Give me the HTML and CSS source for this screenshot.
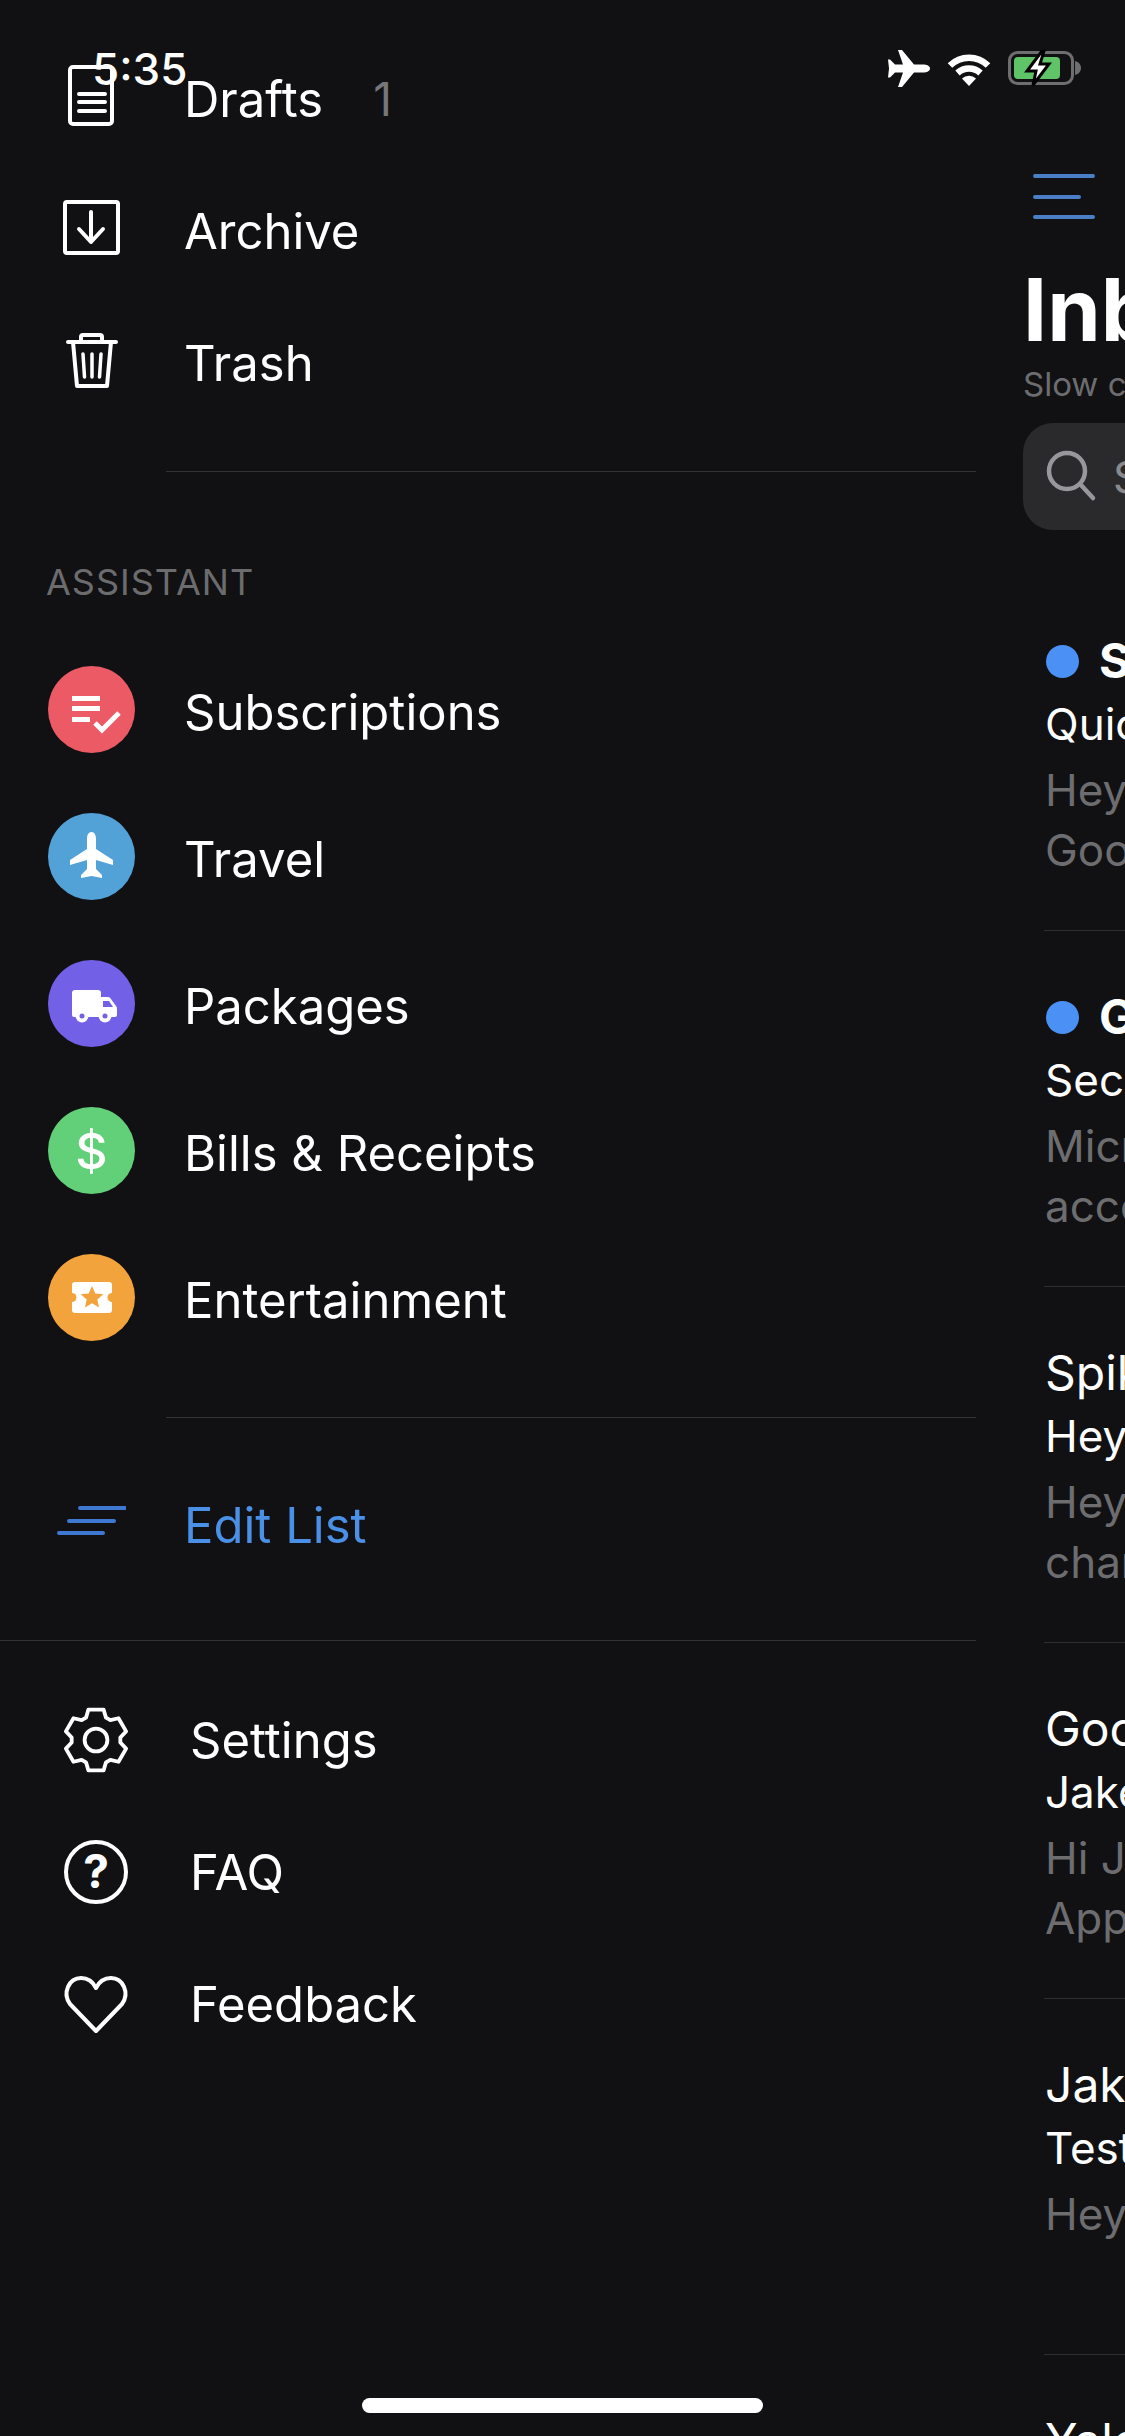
FILE: index.html
```html
<!DOCTYPE html>
<html lang="en">
<head>
    <meta charset="UTF-8">
    <meta name="viewport" content="width=device-width, initial-scale=1.0">
    <title>Inbox</title>
    <link rel="stylesheet" href="styles.css">
</head>
<body>

    <!-- status bar sits over the scrolled list -->
    <div class="status-bar">
        <span class="status-time">5:35</span>
        <svg class="status-plane" width="42" height="37" viewBox="0 0 42 37"><path d="M42 18.5c0-2.500-3-4-7-4h-9L14 0h-4l5 14.500H7L2 9.500H0l1 9-1 9h2l5-5h8L10 37h4l12-14.500h9c4 0 7-1.500 7-4z"/></svg>
        <svg class="status-wifi" width="46" height="34" viewBox="0 0 46 34"><path class="wifi-arc" d="M4 13.500a27 27 0 0 1 38 0"/><path class="wifi-arc" d="M11.500 21a17 17 0 0 1 23 0"/><path d="M23 34l-7-7.500a10 10 0 0 1 14 0z"/></svg>
        <svg class="status-battery" width="74" height="36" viewBox="0 0 74 36">
            <rect x="1.500" y="2.500" width="63" height="31" rx="8" class="battery-shell"/>
            <path d="M67 11c4 1 6 4 6 7s-2 6-6 7z" fill="#6e6e6e"/>
            <rect x="6" y="7" width="46" height="22" rx="4" fill="#5ec467"/>
            <path d="M34 1L19 21h9l-3 14 16-21h-9l4-13z" class="battery-bolt"/>
        </svg>
    </div>

    <div class="screen">

        <nav class="sidebar">
            <ul class="menu">
                <li class="menu-row">
                    <svg class="line-icon" width="64" height="72" viewBox="0 0 64 72"><rect x="10" y="4" width="42" height="57" rx="3"/><path d="M19 31h26M19 39h26M19 48h26"/></svg>
                    <span class="menu-label">Drafts</span>
                    <span class="menu-count">1</span>
                </li>
                <li class="menu-row">
                    <svg class="line-icon" width="64" height="72" viewBox="0 0 64 72"><rect x="5" y="7" width="53" height="51" rx="2"/><path d="M31 17v30M19 34l12 13 12-13"/></svg>
                    <span class="menu-label">Archive</span>
                </li>
                <li class="menu-row">
                    <svg class="line-icon" width="64" height="72" viewBox="0 0 64 72"><path d="M8 15h48M21 15V10q0-2 2-2h17q2 0 2 2v5M13 15l4 44h30l4-44"/><path class="thin" d="M23 27l1.500 23M32 27v23M41 27l-1.500 23"/></svg>
                    <span class="menu-label">Trash</span>
                </li>
            </ul>
            <div class="divider divider-top"></div>

            <div class="section-title">ASSISTANT</div>
            <ul class="menu">
                <li class="assist-row">
                    <svg class="assist-icon" width="87" height="87" viewBox="0 0 87 87"><circle cx="43.500" cy="43.500" r="43.500" fill="#ec5a66"/><path class="glyph-line" d="M24 32.500h28M24 42.500h28M24 53.500h18"/><path class="glyph-line" stroke-width="6" d="M47 57l7 7 17-17"/></svg>
                    <span class="menu-label">Subscriptions</span>
                </li>
                <li class="assist-row">
                    <svg class="assist-icon" width="87" height="87" viewBox="0 0 87 87"><circle cx="43.500" cy="43.500" r="43.500" fill="#52a2d8"/><path class="glyph-fill" d="M43.500 19c3 0 4.500 3 4.500 7v10l17 11v5l-17-5v9l6 6v3l-10.500-2-10.500 2v-3l6-6v-9l-17 5v-5l17-11V26c0-4 1.500-7 4.500-7z"/></svg>
                    <span class="menu-label">Travel</span>
                </li>
                <li class="assist-row">
                    <svg class="assist-icon" width="87" height="87" viewBox="0 0 87 87"><circle cx="43.500" cy="43.500" r="43.500" fill="#7260e6"/><path class="glyph-fill" d="M24 33q0-3 3-3h23q3 0 3 3v4h7q2 0 3 2l5 7q1 1 1 3v6q0 2-2 2H26q-2 0-2-2z"/><path d="M55 41h6l4 6H55z" fill="#7260e6"/><circle cx="34" cy="56" r="6.500" fill="#fff"/><circle cx="34" cy="56" r="2.500" fill="#7260e6"/><circle cx="57" cy="56" r="6.500" fill="#fff"/><circle cx="57" cy="56" r="2.500" fill="#7260e6"/></svg>
                    <span class="menu-label">Packages</span>
                </li>
                <li class="assist-row">
                    <svg class="assist-icon" width="87" height="87" viewBox="0 0 87 87"><circle cx="43.500" cy="43.500" r="43.500" fill="#62d078"/><text x="43.500" y="62" class="glyph-text">$</text></svg>
                    <span class="menu-label">Bills &amp; Receipts</span>
                </li>
                <li class="assist-row">
                    <svg class="assist-icon" width="87" height="87" viewBox="0 0 87 87"><circle cx="43.500" cy="43.500" r="43.500" fill="#f2a33c"/><rect class="glyph-fill" x="24" y="28" width="40" height="31" rx="3"/><circle cx="24" cy="43.500" r="4.500" fill="#f2a33c"/><circle cx="64" cy="43.500" r="4.500" fill="#f2a33c"/><path d="M44 32l3.300 7.500 8 .7-6 5.300 1.800 8L44 49.300l-7.100 4.200 1.800-8-6-5.300 8-.7z" fill="#f2a33c"/></svg>
                    <span class="menu-label">Entertainment</span>
                </li>
            </ul>
            <div class="divider divider-assist"></div>

            <div class="edit-row">
                <svg class="edit-icon" width="70" height="60" viewBox="0 0 70 60"><path d="M24 13h45M13 26h45M3 38h44"/></svg>
                <span class="menu-label edit-label">Edit List</span>
            </div>
            <div class="divider divider-full"></div>

            <ul class="menu menu-bottom">
                <li class="menu-row">
                    <svg class="line-icon" width="64" height="72" viewBox="0 0 64 72"><g transform="translate(32 36) scale(.95)"><polygon points="-10.500,-23.500 -8,-32 8,-32 10.500,-23.500 15.100,-20.840 23.700,-22.900 31.700,-9.100 25.600,-2.660 25.600,2.660 31.700,9.100 23.700,22.900 15.100,20.840 10.500,23.500 8,32 -8,32 -10.500,23.500 -15.100,20.840 -23.700,22.900 -31.700,9.100 -25.600,2.660 -25.600,-2.660 -31.700,-9.100 -23.700,-22.900 -15.100,-20.840"/><circle r="12"/></g></svg>
                    <span class="menu-label">Settings</span>
                </li>
                <li class="menu-row">
                    <svg class="line-icon" width="64" height="72" viewBox="0 0 64 72"><circle cx="32" cy="36" r="30"/><text x="32" y="52" class="faq-mark">?</text></svg>
                    <span class="menu-label">FAQ</span>
                </li>
                <li class="menu-row">
                    <svg class="line-icon" width="64" height="72" viewBox="0 0 64 72"><path d="M32 63L6 36C-2 25 5 10 17 10c7 0 12 4 15 10 3-6 8-10 15-10 12 0 19 15 11 26z"/></svg>
                    <span class="menu-label">Feedback</span>
                </li>
            </ul>
        </nav>

        <main class="inbox">
            <svg class="burger" width="62" height="46" viewBox="0 0 62 46"><path d="M2 2h58M2 23h44M2 43h58"/></svg>
            <h1 class="inbox-title">Inbox</h1>
            <p class="inbox-status">Slow connection</p>
            <div class="search-box">
                <svg class="search-icon" width="56" height="56" viewBox="0 0 56 56"><circle cx="22" cy="22" r="18"/><path d="M36 36l12 13"/></svg>
                <span class="search-text">Search</span>
            </div>

            <div class="mail-row">
                <div class="mail-sender unread"><span class="dot"></span>Spike</div>
                <div class="mail-subject">Quick start</div>
                <div class="mail-preview">Hey Jake,</div>
                <div class="mail-preview">Good to see you</div>
            </div>
            <div class="mail-row">
                <div class="mail-sender unread"><span class="dot"></span>Google</div>
                <div class="mail-subject">Security alert</div>
                <div class="mail-preview">Microsoft</div>
                <div class="mail-preview">account</div>
            </div>
            <div class="mail-row">
                <div class="mail-sender">Spike</div>
                <div class="mail-subject">Hey</div>
                <div class="mail-preview">Hey</div>
                <div class="mail-preview">charge</div>
            </div>
            <div class="mail-row">
                <div class="mail-sender">Google</div>
                <div class="mail-subject">Jake</div>
                <div class="mail-preview">Hi Jake</div>
                <div class="mail-preview">Apple</div>
            </div>
            <div class="mail-row">
                <div class="mail-sender">Jake</div>
                <div class="mail-subject">Test</div>
                <div class="mail-preview">Hey</div>
            </div>
            <div class="mail-row">
                <div class="mail-sender">Yale</div>
            </div>
        </main>
    </div>

    <div class="home-bar"></div>

</body>
</html>
```
FILE: styles.css
```css
html, body {
    margin: 0;
    padding: 0;
    height: 2436px;
    overflow: hidden;
    background: #111113;
    color: #fff;
    font-family: Inter, "Liberation Sans", sans-serif;
}
ul {
    list-style: none;
    margin: 0;
    padding: 0;
}
.screen {
    display: flex;
    width: 1125px;
    height: 2436px;
    overflow: hidden;
}

/* status bar */
.status-bar {
    position: absolute;
    top: 50px;
    left: 0;
    width: 1125px;
    height: 37px;
    z-index: 2;
}
.status-bar svg {
    position: absolute;
    fill: #fff;
}
.status-time {
    position: absolute;
    left: 92px;
    top: 1px;
    font-size: 44px;
    line-height: 36px;
    font-weight: 500;
}
.status-plane { left: 888px; top: 0; }
.status-wifi { left: 946px; top: 2px; }
.status-battery { left: 1008px; top: 0; }
.wifi-arc {
    fill: none;
    stroke: #fff;
    stroke-width: 6.500;
}
.battery-shell {
    fill: none;
    stroke: #6e6e6e;
    stroke-width: 3;
}
.battery-bolt {
    fill: #fff;
    stroke: #000;
    stroke-width: 3;
}

/* sidebar */
.sidebar {
    flex: none;
    width: 976px;
    padding-top: 33px;
    box-sizing: border-box;
}
.menu-row {
    display: flex;
    align-items: center;
    height: 132px;
    padding-left: 60px;
}
.menu-label {
    font-size: 49px;
    margin-left: 60px;
    white-space: nowrap;
}
.menu-count {
    font-size: 46px;
    color: #77777a;
    margin-left: 50px;
}
.line-icon {
    flex: none;
    overflow: visible;
    fill: none;
    stroke: #fff;
    stroke-width: 4;
    stroke-linecap: round;
    stroke-linejoin: round;
}
.line-icon .thin {
    stroke-width: 3.500;
}
.faq-mark {
    fill: #fff;
    stroke: none;
    font-size: 46px;
    font-weight: 700;
    text-anchor: middle;
}
.divider {
    height: 1px;
    background: #323234;
}
.divider-top {
    margin: 42px 0 0 166px;
}
.section-title {
    margin: 88px 0 0 46px;
    line-height: 44px;
    font-size: 36px;
    letter-spacing: 1px;
    color: #6c6c6f;
}
.section-title + .menu {
    margin-top: 32px;
}
.assist-row {
    display: flex;
    align-items: center;
    height: 147px;
    padding-left: 48px;
}
.assist-row .menu-label {
    margin-left: 49px;
    padding-top: 5px;
}
.assist-icon {
    flex: none;
}
.glyph-line {
    fill: none;
    stroke: #fff;
    stroke-width: 5;
}
.glyph-fill {
    fill: #fff;
}
.glyph-text {
    fill: #fff;
    font-size: 50px;
    font-weight: 500;
    text-anchor: middle;
}
.divider-assist {
    margin: 46px 0 0 166px;
}
.edit-row {
    display: flex;
    align-items: center;
    height: 132px;
    margin-top: 41px;
    padding-left: 56px;
}
.edit-icon {
    flex: none;
    fill: none;
    stroke: #3f78d0;
    stroke-width: 4;
    stroke-linecap: round;
}
.edit-label {
    margin-left: 58px;
    color: #4a90e6;
}
.divider-full {
    margin-top: 49px;
}
.menu-bottom {
    margin-top: 33px;
}
.menu-bottom .menu-row {
    padding-left: 64px;
}
.menu-bottom .menu-label {
    margin-left: 62px;
}

/* inbox pane, mostly pushed off the screen */
.inbox {
    flex: none;
    width: 149px;
    padding-top: 174px;
    overflow: hidden;
    white-space: nowrap;
}
.burger {
    display: block;
    margin-left: 57px;
    fill: none;
    stroke: #4a7fc8;
    stroke-width: 4;
    stroke-linecap: round;
}
.inbox-title {
    margin: 45px 0 0 47px;
    font-size: 86px;
    line-height: 90px;
    font-weight: 700;
}
.inbox-status {
    margin: 9px 0 0 47px;
    font-size: 33px;
    line-height: 40px;
    color: #6d6d70;
}
.search-box {
    display: flex;
    align-items: center;
    width: 400px;
    height: 107px;
    margin: 19px 0 0 47px;
    border-radius: 30px;
    background: #2a2a2d;
}
.search-icon {
    flex: none;
    margin-left: 22px;
    fill: none;
    stroke: #98989c;
    stroke-width: 4.500;
    stroke-linecap: round;
}
.search-text {
    margin-left: 12px;
    font-size: 44px;
    color: #8a8a8e;
}
.search-box + .mail-row {
    margin-top: 45px;
}
.mail-row {
    box-sizing: border-box;
    height: 356px;
    margin-left: 68px;
    padding-top: 56px;
    border-bottom: 1px solid #2e2e30;
}
.mail-row > div {
    padding-left: 1px;
    line-height: 60px;
}
.mail-sender {
    display: flex;
    align-items: center;
    font-size: 48px;
}
.mail-sender.unread {
    font-weight: 700;
}
.dot {
    flex: none;
    width: 33px;
    height: 33px;
    margin-left: 1px;
    margin-right: 20px;
    border-radius: 50%;
    background: #4a90f5;
}
.mail-subject {
    margin-top: 3px;
    font-size: 44px;
}
.mail-preview {
    font-size: 44px;
    color: #6d6d70;
}
.mail-subject + .mail-preview {
    margin-top: 6px;
}

.home-bar {
    position: absolute;
    left: 362px;
    top: 2398px;
    width: 401px;
    height: 15px;
    border-radius: 8px;
    background: #fff;
}
```
